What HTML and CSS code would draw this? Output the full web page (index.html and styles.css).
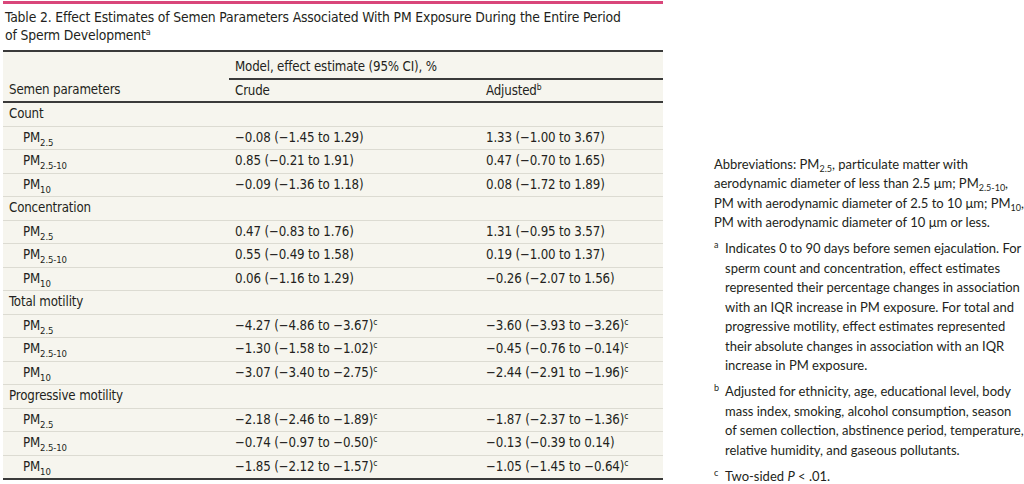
FILE: index.html
```html
<!DOCTYPE html>
<html>
<head>
<meta charset="utf-8">
<link rel="stylesheet" href="styles.css">
</head>
<body>
<div class="page">
  <div class="table-block">
    <div class="bar"></div>
    <h1 class="title">Table 2. Effect Estimates of Semen Parameters Associated With PM Exposure During the Entire Period of Sperm Development<sup>a</sup></h1>
    <table class="data">
      <thead>
        <tr class="hrow1">
          <th class="c1"></th>
          <th colspan="2" class="span">Model, effect estimate (95% CI), %</th>
        </tr>
        <tr class="hrow2">
          <th class="c1">Semen parameters</th>
          <th class="c2">Crude</th>
          <th class="c3">Adjusted<sup>b</sup></th>
        </tr>
      </thead>
      <tbody>
        <tr class="cat"><td colspan="3">Count</td></tr>
        <tr><td class="sub">PM<sub>2.5</sub></td><td>−0.08 (−1.45 to 1.29)</td><td>1.33 (−1.00 to 3.67)</td></tr>
        <tr><td class="sub">PM<sub>2.5-10</sub></td><td>0.85 (−0.21 to 1.91)</td><td>0.47 (−0.70 to 1.65)</td></tr>
        <tr><td class="sub">PM<sub>10</sub></td><td>−0.09 (−1.36 to 1.18)</td><td>0.08 (−1.72 to 1.89)</td></tr>
        <tr class="cat"><td colspan="3">Concentration</td></tr>
        <tr><td class="sub">PM<sub>2.5</sub></td><td>0.47 (−0.83 to 1.76)</td><td>1.31 (−0.95 to 3.57)</td></tr>
        <tr><td class="sub">PM<sub>2.5-10</sub></td><td>0.55 (−0.49 to 1.58)</td><td>0.19 (−1.00 to 1.37)</td></tr>
        <tr><td class="sub">PM<sub>10</sub></td><td>0.06 (−1.16 to 1.29)</td><td>−0.26 (−2.07 to 1.56)</td></tr>
        <tr class="cat"><td colspan="3">Total motility</td></tr>
        <tr><td class="sub">PM<sub>2.5</sub></td><td>−4.27 (−4.86 to −3.67)<sup>c</sup></td><td>−3.60 (−3.93 to −3.26)<sup>c</sup></td></tr>
        <tr><td class="sub">PM<sub>2.5-10</sub></td><td>−1.30 (−1.58 to −1.02)<sup>c</sup></td><td>−0.45 (−0.76 to −0.14)<sup>c</sup></td></tr>
        <tr><td class="sub">PM<sub>10</sub></td><td>−3.07 (−3.40 to −2.75)<sup>c</sup></td><td>−2.44 (−2.91 to −1.96)<sup>c</sup></td></tr>
        <tr class="cat"><td colspan="3">Progressive motility</td></tr>
        <tr><td class="sub">PM<sub>2.5</sub></td><td>−2.18 (−2.46 to −1.89)<sup>c</sup></td><td>−1.87 (−2.37 to −1.36)<sup>c</sup></td></tr>
        <tr><td class="sub">PM<sub>2.5-10</sub></td><td>−0.74 (−0.97 to −0.50)<sup>c</sup></td><td>−0.13 (−0.39 to 0.14)</td></tr>
        <tr class="last"><td class="sub">PM<sub>10</sub></td><td>−1.85 (−2.12 to −1.57)<sup>c</sup></td><td>−1.05 (−1.45 to −0.64)<sup>c</sup></td></tr>
      </tbody>
    </table>
  </div>
  <div class="notes">
    <p class="abbr">Abbreviations: PM<sub>2.5</sub>, particulate matter with aerodynamic diameter of less than 2.5 μm; PM<sub>2.5-10</sub>, PM with aerodynamic diameter of 2.5 to 10 μm; PM<sub>10</sub>, PM with aerodynamic diameter of 10 μm or less.</p>
    <p class="fn"><sup class="mark">a</sup>Indicates 0 to 90 days before semen ejaculation. For sperm count and concentration, effect estimates represented their percentage changes in association with an IQR increase in PM exposure. For total and progressive motility, effect estimates represented their absolute changes in association with an IQR increase in PM exposure.</p>
    <p class="fn"><sup class="mark">b</sup>Adjusted for ethnicity, age, educational level, body mass index, smoking, alcohol consumption, season of semen collection, abstinence period, temperature, relative humidity, and gaseous pollutants.</p>
    <p class="fn"><sup class="mark">c</sup>Two-sided <i>P</i> &lt; .01.</p>
  </div>
</div>
</body>
</html>
```

FILE: styles.css
```css
html, body {
  margin: 0;
  padding: 0;
  background: #ffffff;
  color: #231f20;
}

.page {
  display: flex;
  align-items: flex-end;
  padding-left: 3px;
  height: 484px;
  box-sizing: border-box;
  padding-bottom: 0;
}

.table-block {
  width: 660px;
  flex: none;
  align-self: flex-start;
}

.bar {
  height: 3px;
  margin-top: 1px;
  background: #d9467a;
}

.title {
  max-width: 625px;
  margin: 4px 0 6px 2px;
  font-family: "DejaVu Sans Condensed", "Liberation Sans", sans-serif;
  font-weight: normal;
  font-size: 13.8px;
  letter-spacing: -0.15px;
  line-height: 18px;
  color: #231f20;
}

.title sup {
  font-size: 9px;
  line-height: 0;
  vertical-align: 5px;
}

.data {
  width: 100%;
  border-collapse: collapse;
  background: #f6f5ee;
  font-family: "DejaVu Sans Condensed", "Liberation Sans", sans-serif;
  font-size: 13.2px;
  letter-spacing: -0.15px;
  line-height: 16px;
  color: #231f20;
  border-top: 2px solid #3a3a3a;
  border-bottom: 2px solid #3a3a3a;
}

.data th {
  font-weight: normal;
  text-align: left;
  padding: 0 0 0 6px;
}

.data th.span {
  border-bottom: 2px solid #3a3a3a;
}

.hrow1 th {
  height: 23px;
  vertical-align: middle;
  padding-top: 3px;
}

.hrow2 th {
  height: 21px;
  border-bottom: 2px solid #3a3a3a;
  vertical-align: middle;
}

.data .c1 { width: 220px; }
.data .c2 { width: 245px; }

.data td {
  height: 22.5px;
  padding: 0 0 0 6px;
  border-bottom: 1px solid #dcdbd2;
  vertical-align: middle;
  white-space: nowrap;
}

.data tr.last td {
  border-bottom: none;
}

.data td.sub {
  padding-left: 20px;
}

.data sub {
  font-size: 9.5px;
  line-height: 0;
  vertical-align: -4px;
}

.data sup {
  font-size: 8.5px;
  line-height: 0;
  vertical-align: 5px;
}

.notes {
  width: 310px;
  margin-left: 51px;
  margin-bottom: -2px;
  font-family: Lato, "Open Sans", sans-serif;
  font-size: 13px;
  line-height: 19.5px;
  color: #231f20;
}

.notes p {
  margin: 0 0 6.5px 0;
}

.notes p:last-child {
  margin-bottom: 0;
}

.notes sub {
  font-size: 9px;
  line-height: 0;
  vertical-align: -3px;
}

.notes .fn {
  padding-left: 11px;
  text-indent: -11px;
}

.notes .mark {
  display: inline-block;
  width: 11px;
  text-indent: 0;
  font-size: 9px;
  line-height: 0;
  vertical-align: 5px;
}
```
